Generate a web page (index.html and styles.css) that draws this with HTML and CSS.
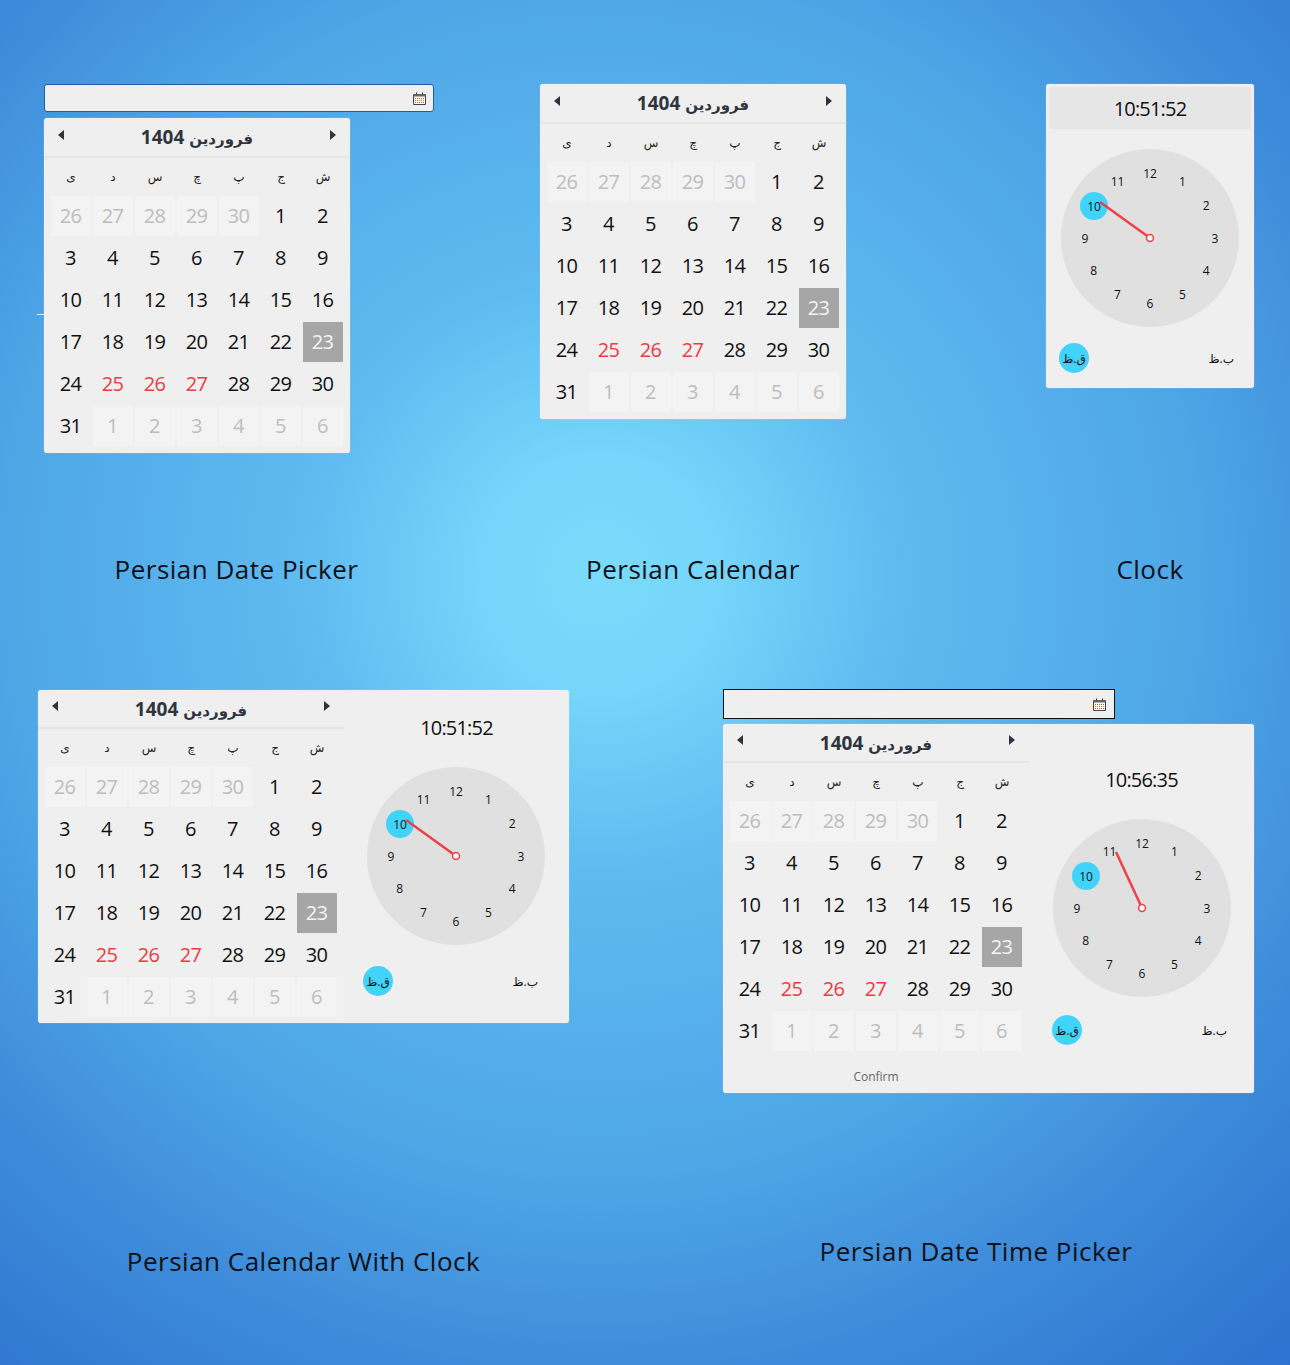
FILE: index.html
```html
<!DOCTYPE html>
<html lang="fa">

<head>
    <meta charset="UTF-8">
    <title>Persian Date Picker</title>
    <link rel="stylesheet" href="styles.css">
</head>

<body>
<div class="page">
    <span class="tick"></span>

    <div class="row row-top">

        <div class="demo">
            <div>
                <div class="date-input">
                    <svg class="cal-icon" viewBox="0 0 13 13"><path class="ic-frame" d="M.5 2.5h12v10H.5z"/><path class="ic-top" d="M.5 2h12v2.5H.5z"/><path class="ic-pegs" d="M3.5.5v2M9.5.5v2"/><path class="ic-dots" d="M2 6.5h9M2 10.5h9" stroke-dasharray="1 1"/><path class="ic-dots2" d="M2 8.5h9" stroke-dasharray="1 1"/></svg>
                </div>
                <div class="card cal cal-picker">
                    <div class="cal-head"><span class="arrow arrow-left"></span><span class="cal-title" dir="rtl"><span class="cal-month">فروردین</span> 1404</span><span class="arrow arrow-right"></span></div>
                    <div class="cal-week"><span>ی</span><span>د</span><span>س</span><span>چ</span><span>پ</span><span>ج</span><span>ش</span></div>
                    <div class="cal-days">
                        <span class="off">26</span><span class="off">27</span><span class="off">28</span><span class="off">29</span><span class="off">30</span><span>1</span><span>2</span>
                        <span>3</span><span>4</span><span>5</span><span>6</span><span>7</span><span>8</span><span>9</span>
                        <span>10</span><span>11</span><span>12</span><span>13</span><span>14</span><span>15</span><span>16</span>
                        <span>17</span><span>18</span><span>19</span><span>20</span><span>21</span><span>22</span><span class="today">23</span>
                        <span>24</span><span class="holiday">25</span><span class="holiday">26</span><span class="holiday">27</span><span>28</span><span>29</span><span>30</span>
                        <span>31</span><span class="off">1</span><span class="off">2</span><span class="off">3</span><span class="off">4</span><span class="off">5</span><span class="off">6</span>
                    </div>
                </div>
            </div>
            <p class="caption caption-picker">Persian Date Picker</p>
        </div>

        <div class="demo">
            <div class="card cal">
                <div class="cal-head"><span class="arrow arrow-left"></span><span class="cal-title" dir="rtl"><span class="cal-month">فروردین</span> 1404</span><span class="arrow arrow-right"></span></div>
                <div class="cal-week"><span>ی</span><span>د</span><span>س</span><span>چ</span><span>پ</span><span>ج</span><span>ش</span></div>
                <div class="cal-days">
                    <span class="off">26</span><span class="off">27</span><span class="off">28</span><span class="off">29</span><span class="off">30</span><span>1</span><span>2</span>
                    <span>3</span><span>4</span><span>5</span><span>6</span><span>7</span><span>8</span><span>9</span>
                    <span>10</span><span>11</span><span>12</span><span>13</span><span>14</span><span>15</span><span>16</span>
                    <span>17</span><span>18</span><span>19</span><span>20</span><span>21</span><span>22</span><span class="today">23</span>
                    <span>24</span><span class="holiday">25</span><span class="holiday">26</span><span class="holiday">27</span><span>28</span><span>29</span><span>30</span>
                    <span>31</span><span class="off">1</span><span class="off">2</span><span class="off">3</span><span class="off">4</span><span class="off">5</span><span class="off">6</span>
                </div>
            </div>
            <p class="caption">Persian Calendar</p>
        </div>

        <div class="demo">
            <div class="card clock-card">
                <div class="clock-band">10:51:52</div>
                <svg class="face" viewBox="0 0 178 178">
                    <circle class="face-bg" cx="89" cy="89" r="89"/>
                    <circle class="face-now" cx="33" cy="57" r="14"/>
                    <text x="89" y="24">12</text><text x="121.5" y="32.7">1</text><text x="145.3" y="56.5">2</text><text x="154" y="89">3</text><text x="145.3" y="121.5">4</text><text x="121.5" y="145.3">5</text><text x="89" y="154">6</text><text x="56.5" y="145.3">7</text><text x="32.7" y="121.5">8</text><text x="24" y="89">9</text><text x="33" y="57">10</text><text x="56.5" y="32.7">11</text>
                    <line class="hand" x1="89" y1="89" x2="39" y2="53"/>
                    <circle class="pivot" cx="89" cy="89" r="3.5"/>
                </svg>
                <div class="ampm ampm-card"><span class="ampm-on" dir="rtl">ق.ظ</span><span class="ampm-off" dir="rtl">ب.ظ</span></div>
            </div>
            <p class="caption">Clock</p>
        </div>

    </div>

    <div class="row row-bottom">

        <div class="demo demo-combo">
            <div class="card combo">
                <div class="cal">
                    <div class="cal-head"><span class="arrow arrow-left"></span><span class="cal-title" dir="rtl"><span class="cal-month">فروردین</span> 1404</span><span class="arrow arrow-right"></span></div>
                    <div class="cal-week"><span>ی</span><span>د</span><span>س</span><span>چ</span><span>پ</span><span>ج</span><span>ش</span></div>
                    <div class="cal-days">
                        <span class="off">26</span><span class="off">27</span><span class="off">28</span><span class="off">29</span><span class="off">30</span><span>1</span><span>2</span>
                        <span>3</span><span>4</span><span>5</span><span>6</span><span>7</span><span>8</span><span>9</span>
                        <span>10</span><span>11</span><span>12</span><span>13</span><span>14</span><span>15</span><span>16</span>
                        <span>17</span><span>18</span><span>19</span><span>20</span><span>21</span><span>22</span><span class="today">23</span>
                        <span>24</span><span class="holiday">25</span><span class="holiday">26</span><span class="holiday">27</span><span>28</span><span>29</span><span>30</span>
                        <span>31</span><span class="off">1</span><span class="off">2</span><span class="off">3</span><span class="off">4</span><span class="off">5</span><span class="off">6</span>
                    </div>
                </div>
                <div class="clock-panel clock-panel-high">
                    <div class="clock-time">10:51:52</div>
                    <svg class="face" viewBox="0 0 178 178">
                        <circle class="face-bg" cx="89" cy="89" r="89"/>
                        <circle class="face-now" cx="33" cy="57" r="14"/>
                        <text x="89" y="24">12</text><text x="121.5" y="32.7">1</text><text x="145.3" y="56.5">2</text><text x="154" y="89">3</text><text x="145.3" y="121.5">4</text><text x="121.5" y="145.3">5</text><text x="89" y="154">6</text><text x="56.5" y="145.3">7</text><text x="32.7" y="121.5">8</text><text x="24" y="89">9</text><text x="33" y="57">10</text><text x="56.5" y="32.7">11</text>
                        <line class="hand" x1="89" y1="89" x2="39" y2="53"/>
                        <circle class="pivot" cx="89" cy="89" r="3.5"/>
                    </svg>
                    <div class="ampm ampm-combo"><span class="ampm-on" dir="rtl">ق.ظ</span><span class="ampm-off" dir="rtl">ب.ظ</span></div>
                </div>
            </div>
            <p class="caption">Persian Calendar With Clock</p>
        </div>

        <div class="demo demo-datetime">
            <div>
                <div class="date-input date-input-wide">
                    <svg class="cal-icon" viewBox="0 0 13 13"><path class="ic-frame" d="M.5 2.5h12v10H.5z"/><path class="ic-top" d="M.5 2h12v2.5H.5z"/><path class="ic-pegs" d="M3.5.5v2M9.5.5v2"/><path class="ic-dots" d="M2 6.5h9M2 10.5h9" stroke-dasharray="1 1"/><path class="ic-dots2" d="M2 8.5h9" stroke-dasharray="1 1"/></svg>
                </div>
                <div class="card combo">
                    <div class="cal">
                        <div class="cal-head"><span class="arrow arrow-left"></span><span class="cal-title" dir="rtl"><span class="cal-month">فروردین</span> 1404</span><span class="arrow arrow-right"></span></div>
                        <div class="cal-week"><span>ی</span><span>د</span><span>س</span><span>چ</span><span>پ</span><span>ج</span><span>ش</span></div>
                        <div class="cal-days">
                            <span class="off">26</span><span class="off">27</span><span class="off">28</span><span class="off">29</span><span class="off">30</span><span>1</span><span>2</span>
                            <span>3</span><span>4</span><span>5</span><span>6</span><span>7</span><span>8</span><span>9</span>
                            <span>10</span><span>11</span><span>12</span><span>13</span><span>14</span><span>15</span><span>16</span>
                            <span>17</span><span>18</span><span>19</span><span>20</span><span>21</span><span>22</span><span class="today">23</span>
                            <span>24</span><span class="holiday">25</span><span class="holiday">26</span><span class="holiday">27</span><span>28</span><span>29</span><span>30</span>
                            <span>31</span><span class="off">1</span><span class="off">2</span><span class="off">3</span><span class="off">4</span><span class="off">5</span><span class="off">6</span>
                        </div>
                        <div class="confirm">Confirm</div>
                    </div>
                    <div class="clock-panel clock-panel-low">
                        <div class="clock-time">10:56:35</div>
                        <svg class="face" viewBox="0 0 178 178">
                            <circle class="face-bg" cx="89" cy="89" r="89"/>
                            <circle class="face-now" cx="33" cy="57" r="14"/>
                            <text x="89" y="24">12</text><text x="121.5" y="32.7">1</text><text x="145.3" y="56.5">2</text><text x="154" y="89">3</text><text x="145.3" y="121.5">4</text><text x="121.5" y="145.3">5</text><text x="89" y="154">6</text><text x="56.5" y="145.3">7</text><text x="32.7" y="121.5">8</text><text x="24" y="89">9</text><text x="33" y="57">10</text><text x="56.5" y="32.7">11</text>
                            <line class="hand" x1="89" y1="89" x2="63" y2="33"/>
                            <circle class="pivot" cx="89" cy="89" r="3.5"/>
                        </svg>
                        <div class="ampm ampm-low"><span class="ampm-on" dir="rtl">ق.ظ</span><span class="ampm-off" dir="rtl">ب.ظ</span></div>
                    </div>
                </div>
            </div>
            <p class="caption caption-datetime">Persian Date Time Picker</p>
        </div>

    </div>
</div>
</body>

</html>
```

FILE: styles.css
```css
* {
    box-sizing: border-box;
}

body {
    margin: 0;
    font-family: "Open Sans", "DejaVu Sans", sans-serif;
    color: #111;
}

.page {
    position: relative;
    height: 1365px;
    padding-top: 84px;
    overflow: hidden;
    background: radial-gradient(circle 1050px at 600px 575px, #7adbfc 0, #75d5fa 120px, #5fbaf0 300px, #4ea6e6 600px, #3e8bda 800px, #2c72cf 1050px);
}

.tick {
    position: absolute;
    left: 37px;
    top: 314px;
    width: 7px;
    height: 1px;
    background: #dff4ff;
}

.row {
    display: grid;
    align-items: start;
    justify-items: start;
}

.row-top {
    grid-template-columns: 496px 506px 208px;
    padding-left: 44px;
}

.row-bottom {
    grid-template-columns: 685px 531px;
    margin-top: 101px;
    padding-left: 38px;
}

.demo {
    display: flex;
    flex-direction: column;
    justify-content: space-between;
    height: 504px;
}

.demo-combo {
    height: 590px;
    margin-top: 1px;
}

.demo-datetime {
    height: 581px;
}

.caption {
    margin: 0;
    height: 36px;
    font-size: 26px;
    line-height: 34px;
    letter-spacing: 0.5px;
    text-align: center;
    color: #0d1117;
}

.caption-picker {
    padding-right: 5px;
}

.caption-datetime {
    padding-right: 25px;
}

.card {
    background: #efefef;
    border-radius: 3px;
    box-shadow: 0 0 1px rgba(255, 255, 255, 0.7);
}

.date-input {
    display: flex;
    align-items: center;
    justify-content: flex-end;
    width: 390px;
    height: 28px;
    margin-bottom: 6px;
    padding-right: 7px;
    background: #efefef;
    border: 1px solid #1f5f9e;
    border-radius: 3px;
}

.date-input-wide {
    width: 392px;
    height: 30px;
    margin-bottom: 5px;
    padding-right: 8px;
    border-color: #111;
    border-radius: 0;
}

.cal-icon {
    width: 13px;
    height: 13px;
}

.ic-frame {
    fill: #f7f7f7;
    stroke: #444;
    stroke-width: 1;
}

.ic-top {
    fill: #666;
}

.ic-pegs {
    fill: none;
    stroke: #333;
}

.ic-dots {
    fill: none;
    stroke: #8a6a5a;
}

.ic-dots2 {
    fill: none;
    stroke: #d08a3c;
}

.cal {
    width: 306px;
}

.cal-head {
    display: flex;
    align-items: center;
    justify-content: space-between;
    height: 40px;
    padding: 0 14px;
    border-bottom: 2px solid #e6e6e6;
}

.cal-title {
    font-size: 19px;
    font-weight: 700;
    color: #30343f;
}

.cal-month {
    font-size: 15px;
}

.arrow {
    width: 0;
    height: 0;
    margin-bottom: 5px;
    border-top: 5px solid transparent;
    border-bottom: 5px solid transparent;
}

.arrow-left {
    border-right: 6px solid #30343f;
}

.arrow-right {
    border-left: 6px solid #30343f;
}

.cal-week {
    display: grid;
    grid-template-columns: repeat(7, 40px);
    gap: 2px;
    align-items: center;
    height: 38px;
    padding: 0 7px 2px;
    font-size: 12px;
    text-align: center;
    color: #222;
}

.cal-days {
    display: grid;
    grid-template-columns: repeat(7, 40px);
    grid-auto-rows: 40px;
    gap: 2px;
    padding: 0 7px 7px;
    font-size: 20px;
    letter-spacing: -0.6px;
}

.cal-days span {
    display: flex;
    align-items: center;
    justify-content: center;
    padding: 0 1px 2px 0;
}

.cal-days .off {
    background: #f3f3f3;
    color: #bdbdbd;
}

.cal-days .today {
    background: #a6a6a6;
    color: #f5f5f5;
}

.cal-days .holiday {
    color: #ee3a43;
}

.clock-card {
    width: 208px;
    height: 304px;
    padding: 3px;
}

.clock-band {
    height: 42px;
    margin-bottom: 20px;
    background: #e6e6e6;
    border-radius: 3px;
    font-size: 20px;
    line-height: 44px;
    letter-spacing: -0.8px;
    text-align: center;
}

.face {
    display: block;
    width: 178px;
    height: 178px;
    margin: 0 auto;
}

.face text {
    font-size: 12px;
    fill: #111;
    text-anchor: middle;
    dominant-baseline: central;
}

.face-bg {
    fill: #e0e0e0;
}

.face-now {
    fill: #40d4fb;
}

.hand {
    stroke: #ee4048;
    stroke-width: 2.5;
}

.pivot {
    fill: #f7f7f7;
    stroke: #ee4048;
    stroke-width: 1.5;
}

.ampm {
    display: flex;
    align-items: center;
    justify-content: space-between;
    width: 182px;
    padding-right: 7px;
    font-size: 12px;
}

.ampm-card {
    margin: 16px 0 0 10px;
}

.ampm-combo {
    margin: 21px 0 0 19px;
}

.ampm-low {
    margin: 18px 0 0 23px;
}

.ampm-on {
    display: flex;
    align-items: center;
    justify-content: center;
    width: 30px;
    height: 30px;
    border-radius: 50%;
    background: #40d4fb;
}

.combo {
    display: flex;
    width: 531px;
}

.combo .cal-head {
    height: 39px;
}

.combo .cal-days {
    padding-bottom: 6px;
}

.clock-panel {
    flex: 1;
    padding-top: 24px;
}

.clock-panel-high .face {
    margin-left: 23px;
}

.clock-panel-low {
    padding-top: 42px;
}

.clock-time {
    height: 28px;
    margin-bottom: 25px;
    font-size: 20px;
    line-height: 28px;
    letter-spacing: -0.8px;
    text-align: center;
}

.confirm {
    height: 36px;
    padding-top: 12px;
    font-size: 12px;
    line-height: 16px;
    text-align: center;
    color: #666;
}
```
